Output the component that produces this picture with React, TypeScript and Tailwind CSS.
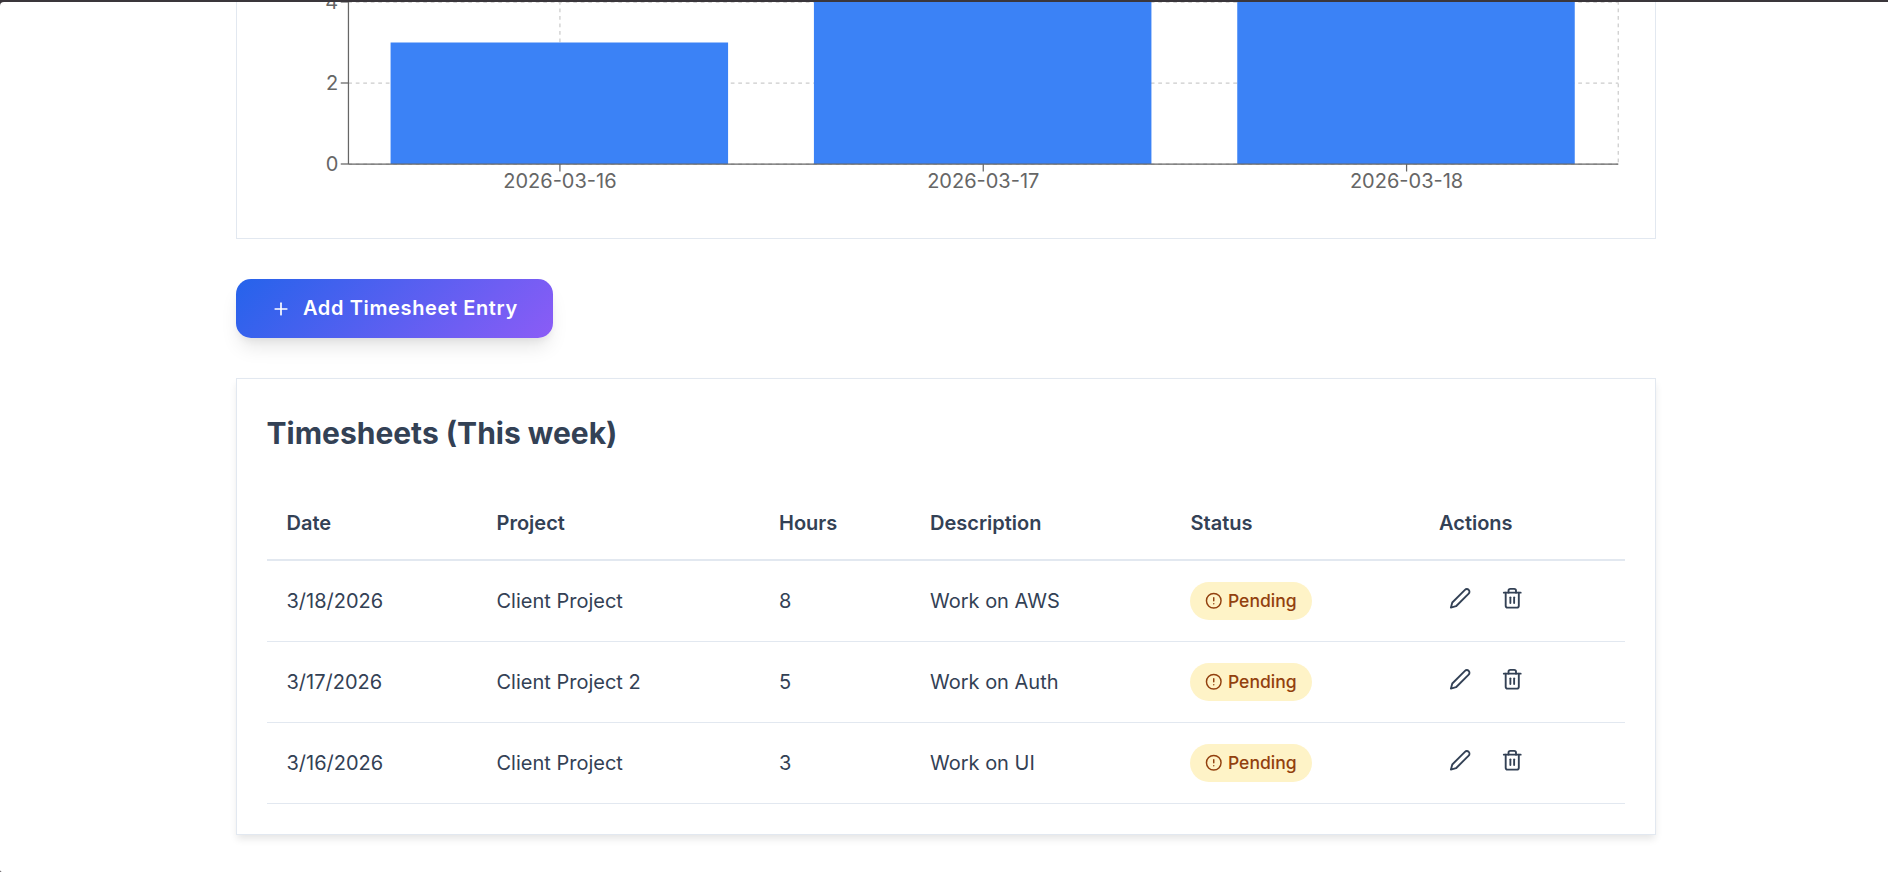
import { FiAlertCircle, FiEdit2, FiPlus, FiTrash2 } from "react-icons/fi";

const bars = [
    { date: "2026-03-16", hours: 3 },
    { date: "2026-03-17", hours: 5 },
    { date: "2026-03-18", hours: 8 },
];

const timesheets = [
    { id: 1, date: "3/18/2026", project: "Client Project", hours: 8, description: "Work on AWS", status: "Pending" },
    { id: 2, date: "3/17/2026", project: "Client Project 2", hours: 5, description: "Work on Auth", status: "Pending" },
    { id: 3, date: "3/16/2026", project: "Client Project", hours: 3, description: "Work on UI", status: "Pending" },
];

// plot area, relative to the chart svg
const LEFT = 111.25;
const RIGHT = 1381.25;
const BASE = 162;
const UNIT = 40.5;
const BAND = (RIGHT - LEFT) / 3;

function HoursChart() {
    return (
        <svg width="1418" height="200" className="block overflow-hidden text-xl">
            <g stroke="#ccc" strokeWidth="1.25" strokeDasharray="3.75 3.75">
                {[0, 2, 4].map((v) => (
                    <line key={v} x1={LEFT} x2={RIGHT} y1={BASE - v * UNIT} y2={BASE - v * UNIT} />
                ))}
                {bars.map((b, i) => (
                    <line key={b.date} x1={LEFT + BAND * (i + 0.5)} x2={LEFT + BAND * (i + 0.5)} y1={-1} y2={BASE} />
                ))}
                <line x1={RIGHT} x2={RIGHT} y1={-1} y2={BASE} />
            </g>
            {bars.map((b, i) => (
                <rect
                    key={b.date}
                    x={LEFT + BAND * (i + 0.1)}
                    y={BASE - b.hours * UNIT}
                    width="337.5"
                    height={b.hours * UNIT}
                    fill="#3b82f6"
                />
            ))}
            <g stroke="#666" strokeWidth="1.25">
                <line x1={LEFT} x2={RIGHT} y1={BASE + 0.2} y2={BASE + 0.2} />
                <line x1={LEFT + 0.2} x2={LEFT + 0.2} y1={-1} y2={BASE} />
                {[0, 2, 4].map((v) => (
                    <line key={v} x1={LEFT - 7.5} x2={LEFT} y1={BASE - v * UNIT} y2={BASE - v * UNIT} />
                ))}
                {bars.map((b, i) => (
                    <line key={b.date} x1={LEFT + BAND * (i + 0.5)} x2={LEFT + BAND * (i + 0.5)} y1={BASE} y2={BASE + 7.5} />
                ))}
            </g>
            <g fill="#666">
                {[0, 2, 4].map((v) => (
                    <text key={v} x={LEFT - 10} y={BASE - v * UNIT} dy="0.355em" textAnchor="end">{v}</text>
                ))}
                {bars.map((b, i) => (
                    <text key={b.date} x={LEFT + BAND * (i + 0.5)} y={BASE + 10} dy="0.71em" textAnchor="middle">{b.date}</text>
                ))}
            </g>
        </svg>
    );
}

function StatusBadge({ label }: { label: string }) {
    return (
        <span className="-ml-px inline-flex h-[38px] items-center gap-1.5 rounded-full bg-[#fef3c7] px-[15px] text-[17.5px] font-medium text-[#92400e]">
            <FiAlertCircle size={17.5} />
            {label}
        </span>
    );
}

export default function App() {
    return (
        <div className="h-[872px] overflow-hidden bg-[#3a363b] pt-0.5 font-['Inter',sans-serif] text-xl text-[#334155]">
            <main className="h-[870px] rounded-tl-[4px] rounded-bl-[2px] bg-white pl-[236px]">
                <div className="w-[1420px]">
                    <section className="h-[237px] border border-t-0 border-[#e2e8f0]">
                        <HoursChart />
                    </section>

                    <button className="mt-10 flex h-[59px] items-center gap-3 rounded-[15px] bg-[linear-gradient(135deg,#2563eb,#8b5cf6)] px-[35px] font-semibold tracking-[0.625px] text-white shadow-[0_12.5px_18.75px_-3.75px_rgba(0,0,0,0.1),0_5px_7.5px_-2.5px_rgba(0,0,0,0.05)]">
                        <FiPlus size={20} />
                        <span className="pb-0.5">Add Timesheet Entry</span>
                    </button>

                    <section className="mt-10 h-[457px] border border-[#e2e8f0] bg-white px-[30px] pt-[30px] shadow-[0_5px_7.5px_-1px_rgba(0,0,0,0.1)]">
                        <h2 className="-ml-[0.5px] h-[76px] text-[30px] leading-[48px] font-bold">Timesheets (This week)</h2>
                        <table className="w-full table-fixed border-separate border-spacing-0 text-left">
                            <thead>
                                <tr className="h-[76px] [&>th]:border-b-2 [&>th]:border-[#e2e8f0] [&>th]:px-5 [&>th]:pt-0.5 [&>th]:font-semibold [&>th:first-child]:pl-[19.5px]">
                                    <th className="w-[209.5px]">Date</th>
                                    <th className="w-[282.5px]">Project</th>
                                    <th className="w-[151px]">Hours</th>
                                    <th className="w-[260.5px]">Description</th>
                                    <th className="w-[248.5px]">Status</th>
                                    <th>Actions</th>
                                </tr>
                            </thead>
                            <tbody>
                                {timesheets.map((t) => (
                                    <tr key={t.id} className="h-[81px] [&>td]:border-b [&>td]:border-[#e2e8f0] [&>td]:px-5 [&>td:first-child]:pl-[19.5px]">
                                        <td>{t.date}</td>
                                        <td>{t.project}</td>
                                        <td>{t.hours}</td>
                                        <td>{t.description}</td>
                                        <td className="leading-none">
                                            <StatusBadge label={t.status} />
                                        </td>
                                        <td>
                                            <div className="flex gap-[9.5px] pb-1.5">
                                                <button className="px-2.5"><FiEdit2 size={22.5} /></button>
                                                <button className="px-2.5"><FiTrash2 size={22.5} /></button>
                                            </div>
                                        </td>
                                    </tr>
                                ))}
                            </tbody>
                        </table>
                    </section>
                </div>
            </main>
        </div>
    );
}
